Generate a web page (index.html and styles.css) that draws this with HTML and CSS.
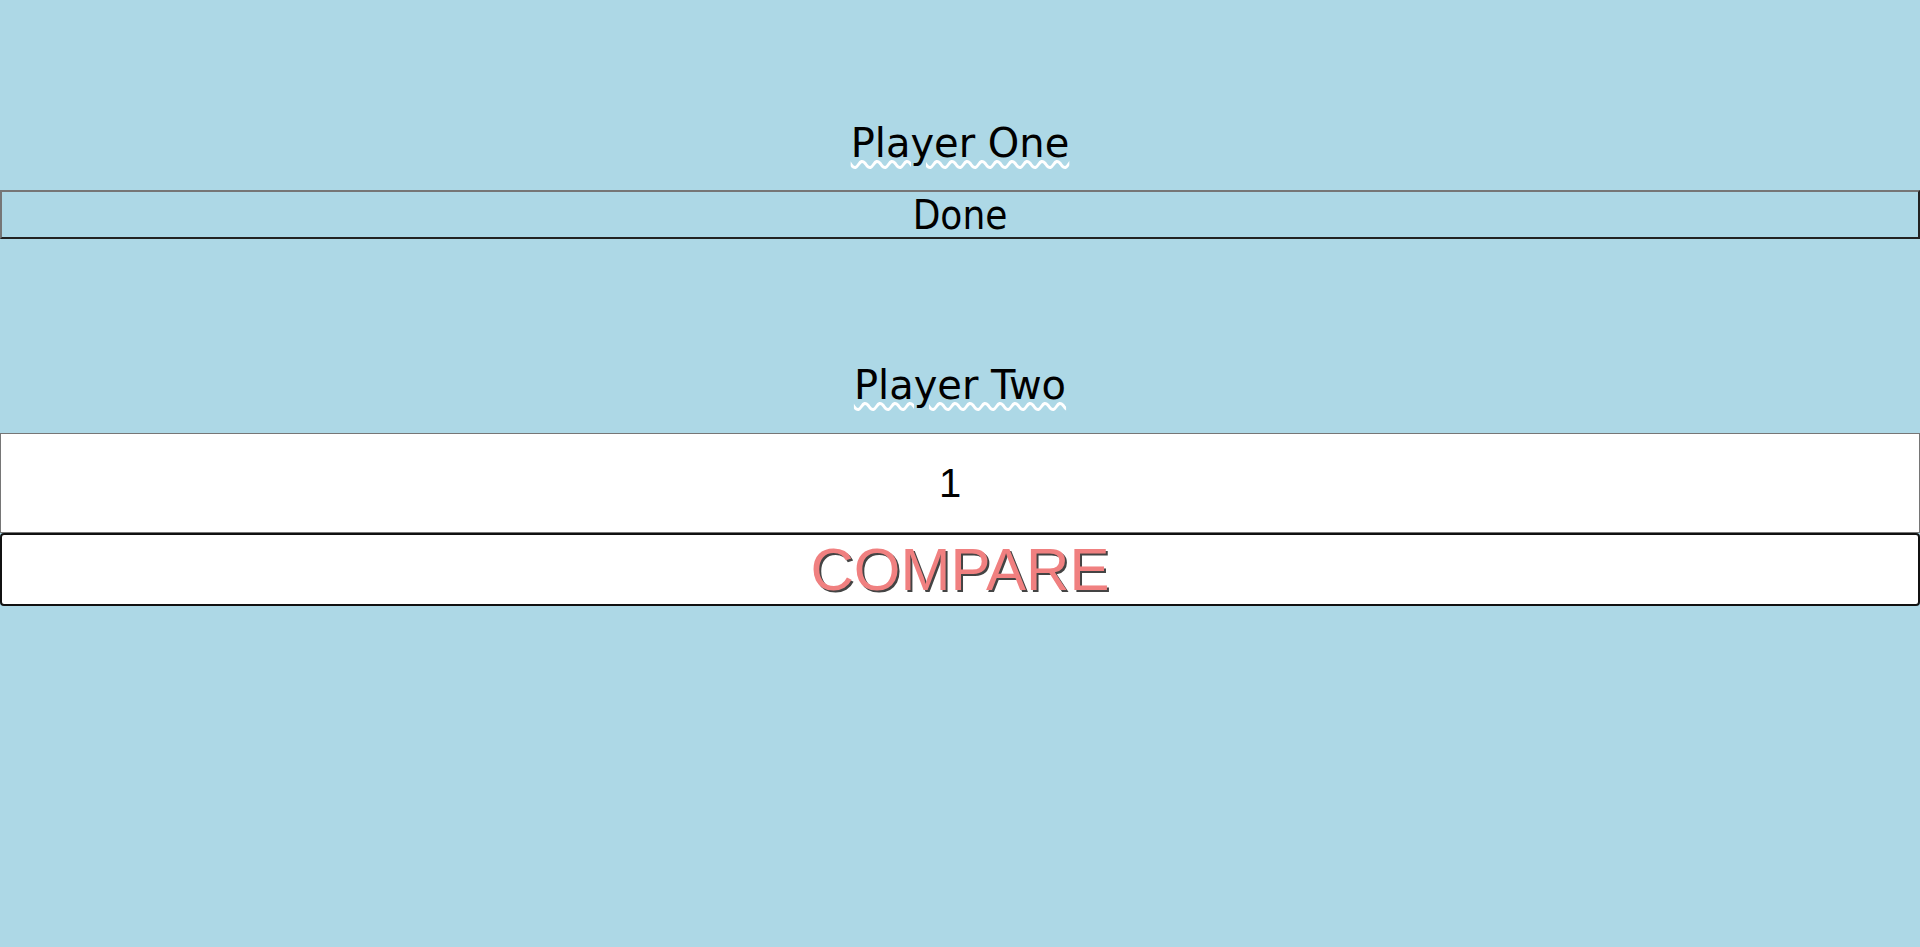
FILE: index.html
```html
<!DOCTYPE html>
<html lang="en">
<head>
<meta charset="utf-8">
<title>Compare</title>
<link rel="stylesheet" href="styles.css">
</head>
<body>
<main class="page">
  <section class="player">
    <h1 class="player-name"><span class="name-text">Player One</span></h1>
    <button class="done-btn" type="button">Done</button>
  </section>
  <section class="player player-two">
    <h1 class="player-name"><span class="name-text">Player Two</span></h1>
    <input class="guess-input" type="number" value="1">
  </section>
  <button class="compare-btn" type="button">COMPARE</button>
</main>
</body>
</html>
```
FILE: styles.css
```css
html, body {
  margin: 0;
  padding: 0;
  background: #add8e6;
}

body {
  font-family: "DejaVu Sans", Verdana, sans-serif;
  color: #000;
}

.page {
  display: flex;
  flex-direction: column;
  padding-top: 119px;
}

.player {
  display: flex;
  flex-direction: column;
}

.player-two {
  margin-top: 122px;
}

.player-name {
  margin: 0;
  font-size: 40px;
  line-height: 48px;
  font-weight: normal;
  text-align: center;
}

.name-text {
  text-decoration-line: underline;
  text-decoration-style: wavy;
  text-decoration-color: #fff;
  text-decoration-thickness: 3px;
  text-underline-offset: 3px;
  text-decoration-skip-ink: auto;
}

.done-btn {
  display: block;
  width: 100%;
  margin: 23px 0 0;
  height: 49px;
  box-sizing: border-box;
  padding: 0;
  border-style: solid;
  border-width: 2px;
  border-color: #767676 #222 #222 #767676;
  background: transparent;
  color: #000;
  font-family: "DejaVu Sans Condensed", "DejaVu Sans", sans-serif;
  font-stretch: condensed;
  font-size: 40px;
  line-height: 47px;
}

.guess-input {
  display: block;
  width: 100%;
  margin: 24px 0 0;
  height: 100px;
  box-sizing: border-box;
  padding: 1px 7px 1px 2px;
  border: 1px solid #767676;
  background: #fff;
  color: #000;
  font-family: "Liberation Sans", Arial, sans-serif;
  font-size: 40px;
  text-align: center;
}

.compare-btn {
  display: block;
  width: 100%;
  height: 73px;
  box-sizing: border-box;
  margin: 0;
  padding: 0;
  border: 2px solid #111;
  border-radius: 4px;
  background: #fff;
  color: #f08080;
  font-family: "Liberation Sans", Arial, sans-serif;
  font-size: 60px;
  line-height: 67px;
  text-shadow: 2px 2px 0 #444;
}
```
